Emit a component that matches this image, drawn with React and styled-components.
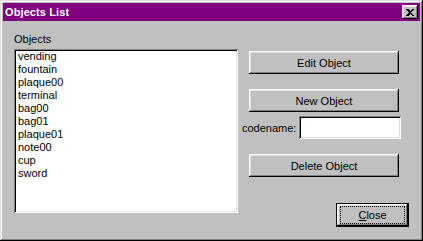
import React from 'react'
import styled, { createGlobalStyle } from 'styled-components'

const GlobalStyle = createGlobalStyle`
  body {
    margin: 0;
    background: #ffffff;
    font-family: "Liberation Sans", Arial, sans-serif;
    font-size: 11px;
  }
`

const raised = `
  box-shadow: inset -1px -1px #000000, inset 1px 1px #ffffff,
    inset -2px -2px #808080, inset 2px 2px #dfdfdf;
`
const sunken = `
  box-shadow: inset 1px 1px #808080, inset -1px -1px #ffffff,
    inset 2px 2px #000000, inset -2px -2px #dfdfdf;
`

const Window = styled.div`
  box-sizing: border-box;
  width: 423px;
  height: 241px;
  padding: 3px;
  display: flex;
  flex-direction: column;
  background: #c0c0c0;
  color: #000;
  box-shadow: inset -1px -1px #000000, inset 1px 1px #dfdfdf,
    inset -2px -2px #808080, inset 2px 2px #ffffff;
`

const TitleBar = styled.div`
  height: 18px;
  display: flex;
  align-items: center;
  justify-content: space-between;
  padding: 0 2px;
  background: #800080;
`

const Title = styled.span`
  color: #ffffff;
  font-weight: 700;
  font-size: 11px;
  letter-spacing: 0.1px;
`

const TitleButton = styled.button`
  box-sizing: border-box;
  width: 16px;
  height: 14px;
  padding: 0;
  border: none;
  background: #c0c0c0;
  display: flex;
  align-items: center;
  justify-content: center;
  ${raised}
`

const Body = styled.div`
  flex: 1;
  display: flex;
  padding-left: 11px;
`

const LeftPane = styled.div`
  width: 224px;
  padding-top: 12px;
  display: flex;
  flex-direction: column;
`

const Label = styled.div`
  line-height: 13px;
  height: 13px;
  margin-bottom: 3px;
`

const ListBox = styled.ul`
  box-sizing: border-box;
  height: 164px;
  margin: 0;
  padding: 1px 4px;
  list-style: none;
  background: #ffffff;
  ${sunken}
`

const Item = styled.li`
  line-height: 13px;
  height: 13px;
`

const RightPane = styled.div`
  width: 167px;
  margin-left: 4px;
  padding-top: 30px;
  display: flex;
  flex-direction: column;
  align-items: flex-start;
`

const Button = styled.button`
  box-sizing: border-box;
  width: ${p => p.$w || 150}px;
  height: ${p => p.$h || 23}px;
  margin-top: ${p => p.$mt || 0}px;
  margin-left: ${p => (p.$end ? 0 : 7)}px;
  align-self: ${p => (p.$end ? 'flex-end' : 'flex-start')};
  padding: 0;
  border: ${p => (p.$default ? '1px solid #000' : 'none')};
  background: #c0c0c0;
  font-family: "Liberation Sans", Arial, sans-serif;
  font-size: 11px;
  color: #000;
  position: relative;
  ${raised}
`

const FocusRing = styled.span`
  position: absolute;
  left: 3px;
  right: 3px;
  top: 2px;
  bottom: 2px;
  border: 1px dotted #000;
`

const CodeRow = styled.div`
  width: 159px;
  height: 23px;
  margin-top: 4px;
  display: flex;
  align-items: center;
  justify-content: space-between;
`

const TextInput = styled.input`
  box-sizing: border-box;
  width: 102px;
  height: 23px;
  border: none;
  outline: none;
  padding: 2px 4px;
  background: #ffffff;
  font-family: "Liberation Sans", Arial, sans-serif;
  font-size: 11px;
  ${sunken}
`

const objects = ['vending', 'fountain', 'plaque00', 'terminal', 'bag00', 'bag01', 'plaque01', 'note00', 'cup', 'sword']

export default function App() {
  return (
    <>
      <GlobalStyle />
      <Window>
        <TitleBar>
          <Title>Objects List</Title>
          <TitleButton aria-label="close">
            <svg width="8" height="7" viewBox="0 0 8 7" shapeRendering="crispEdges">
              <path d="M0 0h2l2 2 2-2h2L5 3.5 8 7H6L4 5 2 7H0l3-3.5z" fill="#000" />
            </svg>
          </TitleButton>
        </TitleBar>
        <Body>
          <LeftPane>
            <Label>Objects</Label>
            <ListBox>
              {objects.map(o => <Item key={o}>{o}</Item>)}
            </ListBox>
          </LeftPane>
          <RightPane>
            <Button>Edit Object</Button>
            <Button $mt={15}>New Object</Button>
            <CodeRow>
              <span>codename:</span>
              <TextInput />
            </CodeRow>
            <Button $mt={15}>Delete Object</Button>
            <Button $mt={26} $w={73} $h={24} $end $default>
              <FocusRing />
              <u>C</u>lose
            </Button>
          </RightPane>
        </Body>
      </Window>
    </>
  )
}
